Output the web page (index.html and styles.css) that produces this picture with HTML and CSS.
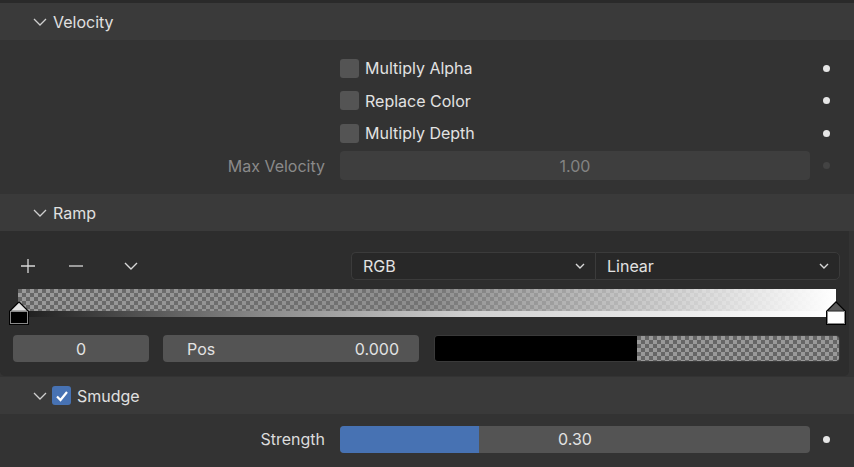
FILE: index.html
```html
<!DOCTYPE html>
<html>
<head>
<meta charset="utf-8">
<link rel="stylesheet" href="styles.css">
</head>
<body>
<div class="panel">
  <div class="topstrip"></div>

  <div class="header">
    <svg class="chev" width="14" height="8" viewBox="0 0 14 8"><path d="M1 1 L7 7 L13 1" fill="none" stroke="#cfcfcf" stroke-width="1.3"/></svg>
    <span class="title">Velocity</span>
  </div>
  <div class="body velocity">
    <div class="row">
      <div class="label"></div>
      <div class="ctrl check-ctrl"><span class="checkbox"></span><span class="check-label">Multiply Alpha</span></div>
      <div class="dotcol"><span class="dot"></span></div>
    </div>
    <div class="row">
      <div class="label"></div>
      <div class="ctrl check-ctrl"><span class="checkbox"></span><span class="check-label">Replace Color</span></div>
      <div class="dotcol"><span class="dot"></span></div>
    </div>
    <div class="row">
      <div class="label"></div>
      <div class="ctrl check-ctrl"><span class="checkbox"></span><span class="check-label">Multiply Depth</span></div>
      <div class="dotcol"><span class="dot"></span></div>
    </div>
    <div class="row">
      <div class="label disabled">Max Velocity</div>
      <div class="ctrl"><div class="field field-disabled">1.00</div></div>
      <div class="dotcol"><span class="dot dot-dim"></span></div>
    </div>
  </div>

  <div class="header">
    <svg class="chev" width="14" height="8" viewBox="0 0 14 8"><path d="M1 1 L7 7 L13 1" fill="none" stroke="#cfcfcf" stroke-width="1.3"/></svg>
    <span class="title">Ramp</span>
  </div>
  <div class="ramp-body">
    <div class="toolbar">
      <div class="tools">
        <svg class="tool" width="16" height="16" viewBox="0 0 16 16"><path d="M1 8 H15 M8 1 V15" stroke="#d8d8d8" stroke-width="1.3" fill="none"/></svg>
        <svg class="tool tool-minus" width="16" height="16" viewBox="0 0 16 16"><path d="M1 8 H15" stroke="#d8d8d8" stroke-width="1.3" fill="none"/></svg>
        <svg class="tool tool-chev" width="16" height="16" viewBox="0 0 16 16"><path d="M2 5 L8 11 L14 5" stroke="#d8d8d8" stroke-width="1.4" fill="none"/></svg>
      </div>
      <div class="menus">
        <div class="menu menu-left"><span>RGB</span><svg width="10" height="6" viewBox="0 0 10 6"><path d="M1 1 L5 5 L9 1" stroke="#d8d8d8" stroke-width="1.4" fill="none"/></svg></div>
        <div class="menu menu-right"><span>Linear</span><svg width="10" height="6" viewBox="0 0 10 6"><path d="M1 1 L5 5 L9 1" stroke="#d8d8d8" stroke-width="1.4" fill="none"/></svg></div>
      </div>
    </div>
    <div class="rampbar">
      <div class="ramp-alpha"></div>
      <div class="ramp-solid"></div>
      <svg class="marker marker-left" width="20" height="24" viewBox="0 0 20 24">
        <path d="M10 0 L20 10 V24 H0 V10 Z" fill="#000"/>
        <path d="M10 1.8 L18 9.8 H2 Z" fill="#e4e4e4"/>
        <rect x="1.5" y="10.5" width="17" height="12" fill="#000" stroke="#8a8a8a" stroke-width="1"/>
      </svg>
      <svg class="marker marker-right" width="20" height="24" viewBox="0 0 20 24">
        <path d="M10 0 L20 10 V24 H0 V10 Z" fill="#000"/>
        <path d="M10 1.8 L18 9.8 H2 Z" fill="#5a5a5a"/>
        <rect x="1.5" y="10.5" width="17" height="12" fill="#fff" stroke="#8a8a8a" stroke-width="1"/>
      </svg>
    </div>
    <div class="fields">
      <div class="field field-index">0</div>
      <div class="field field-pos"><span>Pos</span><span>0.000</span></div>
      <div class="swatch"><div class="swatch-black"></div><div class="swatch-alpha"></div></div>
    </div>
  </div>

  <div class="header smudge-header">
    <svg class="chev" width="14" height="8" viewBox="0 0 14 8"><path d="M1 1 L7 7 L13 1" fill="none" stroke="#cfcfcf" stroke-width="1.3"/></svg>
    <span class="checkbox checked"><svg width="14" height="12" viewBox="0 0 14 12"><path d="M2 6.5 L5.5 10 L12 2" fill="none" stroke="#fff" stroke-width="2.2"/></svg></span>
    <span class="title smudge-title">Smudge</span>
  </div>
  <div class="body smudge">
    <div class="row">
      <div class="label">Strength</div>
      <div class="ctrl"><div class="slider"><div class="slider-fill" style="width:29.6%"></div><span class="slider-val">0.30</span></div></div>
      <div class="dotcol"><span class="dot"></span></div>
    </div>
  </div>
</div>
</body>
</html>
```

FILE: styles.css
```css
html, body {
  margin: 0;
  padding: 0;
  background: #333333;
}
body {
  width: 854px;
  height: 467px;
  overflow: hidden;
  font-family: Inter, "Noto Sans", "Liberation Sans", sans-serif;
  font-size: 16px;
  color: #e2e2e2;
}
.panel {
  display: flex;
  flex-direction: column;
  width: 854px;
}
.topstrip {
  height: 3px;
  background: #2a2a2a;
}
.header {
  height: 37px;
  background: #3a3a3a;
  display: flex;
  align-items: center;
  padding-left: 33px;
  box-sizing: border-box;
}
.chev {
  display: block;
  margin-top: 1px;
}
.title {
  margin-left: 6px;
  color: #e0e0e0;
  padding-top: 1px;
}
.body {
  background: #333333;
  display: flex;
  flex-direction: column;
}
.velocity {
  padding: 12px 0 12px 0;
  height: 154px;
  box-sizing: border-box;
}
.row {
  display: grid;
  grid-template-columns: 340px 470px 44px;
  height: 32.5px;
  align-items: center;
}
.label {
  text-align: right;
  padding-right: 15px;
  color: #dcdcdc;
}
.label.disabled {
  color: #8a8a8a;
}
.ctrl {
  display: flex;
  align-items: center;
}
.check-ctrl {
  gap: 6px;
}
.checkbox {
  display: inline-block;
  width: 19px;
  height: 19px;
  border-radius: 3px;
  background: #545454;
  box-sizing: border-box;
}
.checkbox.checked {
  background: #4772b3;
  display: flex;
  align-items: center;
  justify-content: center;
  margin-left: 5px;
}
.check-label {
  color: #e2e2e2;
}
.dotcol {
  display: flex;
  align-items: center;
  padding-left: 13px;
}
.dot {
  width: 7px;
  height: 7px;
  border-radius: 50%;
  background: #e6e6e6;
}
.dot-dim {
  background: #434343;
}
.field {
  height: 28px;
  border-radius: 4px;
  background: #545454;
  display: flex;
  align-items: center;
  justify-content: center;
  color: #e2e2e2;
  width: 100%;
  box-sizing: border-box;
}
.field-disabled {
  background: #3e3e3e;
  color: #838383;
  height: 29px;
}
.ramp-body {
  background: #2d2d2d;
  width: 849px;
  height: 145px;
  box-sizing: border-box;
  border-radius: 0 0 5px 5px;
  padding: 21px 0 0 0;
  display: flex;
  flex-direction: column;
}
.toolbar {
  display: flex;
  align-items: center;
  height: 28px;
}
.tools {
  display: flex;
  align-items: center;
  width: 351px;
  padding-left: 20px;
  box-sizing: border-box;
}
.tool {
  display: block;
}
.tool-minus {
  margin-left: 32px;
}
.tool-chev {
  margin-left: 39px;
}
.menus {
  display: flex;
  width: 489px;
  height: 28px;
}
.menu {
  flex: 1;
  background: #282828;
  border: 1px solid #3b3b3b;
  display: flex;
  align-items: center;
  justify-content: space-between;
  padding: 0 10px 0 11px;
  box-sizing: border-box;
  color: #e2e2e2;
}
.menu-left {
  border-radius: 5px 0 0 5px;
  border-right: none;
}
.menu-right {
  border-radius: 0 5px 5px 0;
}
.rampbar {
  position: relative;
  margin: 9px 0 0 18px;
  width: 818px;
  height: 28px;
  display: flex;
  flex-direction: column;
}
.ramp-alpha {
  height: 22px;
  background-image:
    linear-gradient(to right, rgba(0,0,0,0), rgba(128,128,128,0.5), rgba(255,255,255,1)),
    conic-gradient(#9a9a9a 25%, #676767 0 50%, #9a9a9a 0 75%, #676767 0);
  background-size: 100% 100%, 8px 8px;
}
.ramp-solid {
  height: 6px;
  background: linear-gradient(to right, #1c1c1c, #8a8a8a 30%, #d0d0d0 55%, #ffffff);
}
.marker {
  position: absolute;
  top: 12px;
}
.marker-left {
  left: -9px;
}
.marker-right {
  left: 808px;
}
.fields {
  display: flex;
  margin: 18px 0 0 13px;
  height: 27px;
}
.fields .field {
  height: 27px;
}
.field-index {
  width: 136px;
}
.field-pos {
  width: 256px;
  margin-left: 14px;
  justify-content: space-between;
  padding: 0 20px 0 24px;
}
.swatch {
  width: 406px;
  margin-left: 15px;
  border-radius: 4px;
  overflow: hidden;
  display: flex;
  border: 1px solid #3a3a3a;
  box-sizing: border-box;
}
.swatch-black {
  width: 50%;
  background: #000;
}
.swatch-alpha {
  width: 50%;
  background-image: conic-gradient(#999999 25%, #666666 0 50%, #999999 0 75%, #666666 0);
  background-size: 8px 8px;
}
.smudge-header {
  margin-top: 1px;
}
.smudge-title {
  margin-left: 6px;
}
.smudge {
  height: 54px;
  padding-top: 11px;
  box-sizing: border-box;
}
.smudge .row {
  height: 28px;
}
.slider {
  position: relative;
  width: 100%;
  height: 27px;
  border-radius: 4px;
  background: #545454;
  overflow: hidden;
  display: flex;
  align-items: center;
  justify-content: center;
}
.slider-fill {
  position: absolute;
  left: 0;
  top: 0;
  bottom: 0;
  background: #4772b3;
}
.slider-val {
  position: relative;
  color: #e2e2e2;
}
```
